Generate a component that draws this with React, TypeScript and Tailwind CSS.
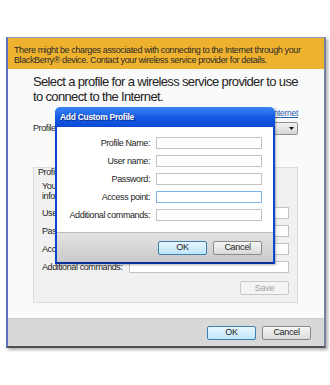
import React from 'react';

const Field = ({ focused }: { focused?: boolean }) => (
  <div
    className={
      'h-[12px] bg-white border ' +
      (focused ? 'border-[#7eb4ea]' : 'border-[#c3c3c3]')
    }
  />
);

const Btn = ({ label, primary, disabled }: { label: string; primary?: boolean; disabled?: boolean }) => (
  <div
    className={
      'w-[49px] h-[14px] rounded-[2px] border flex items-center justify-center text-[9px] leading-none tracking-[-0.3px] ' +
      (primary
        ? 'border-[#3c7fb1] bg-gradient-to-b from-[#eaf6fd] to-[#bee6fd] text-[#1e1e1e]'
        : disabled
        ? 'border-[#c9c9c9] bg-[#f4f4f4] text-[#a0a0a0]'
        : 'border-[#8a8a8a] bg-gradient-to-b from-[#f6f6f6] to-[#dadada] text-[#1e1e1e]')
    }
  >
    {label}
  </div>
);

export default function App() {
  return (
    <div className="relative w-[330px] h-[385px] bg-white pt-[37px] pl-[6px] font-['Liberation_Sans',Arial,sans-serif] text-[#1e1e1e]">
      {/* main window */}
      <div className="w-[320px] h-[311px] flex flex-col border-t border-t-[#8c97c4] border-l-2 border-l-[#5f71c0] border-r-2 border-r-[#75809f] border-b-2 border-b-[#505050] shadow-[2px_2px_3px_rgba(0,0,0,0.3)]">
        <div className="h-[31px] shrink-0 bg-[#efb22f] pl-[6px] pt-[7px] text-[9px] leading-[10px] tracking-[-0.38px] text-[#2a2a2a] whitespace-nowrap">
          <p>There might be charges associated with connecting to the Internet through your</p>
          <p>BlackBerry® device. Contact your wireless service provider for details.</p>
        </div>

        <div className="h-[249px] shrink-0 bg-[#fafafa] pl-[25px] pr-[26px] pt-[5px]">
          <h1 className="text-[13px] leading-[15px] tracking-[-0.65px] text-[#222] whitespace-nowrap">
            Select a profile for a wireless service provider to use
            <br />
            to connect to the Internet.
          </h1>
          <div className="mt-[4px] flex justify-end text-[8.5px] leading-[10px] tracking-[-0.3px]">
            <span className="text-[#2a5db0] underline">Set up Internet</span>
          </div>
          <div className="mt-[4px] h-[13px] flex items-center justify-between">
            <span className="text-[9px] tracking-[-0.4px]">Profile:</span>
            <div className="w-[150px] h-[13px] border border-[#8e8f8f] rounded-[2px] bg-gradient-to-b from-[#f2f2f2] to-[#d6d6d6] flex items-center justify-end pr-[3px]">
              <svg width="5" height="3" viewBox="0 0 5 3">
                <path d="M0 0h5L2.5 3z" fill="#111" />
              </svg>
            </div>
          </div>

          <div className="mt-[32px] h-[136px] border border-[#dcdcdc] bg-[#f1f1f1] pl-[8px] pr-[8px] text-[9px] tracking-[-0.4px]">
            <p className="-ml-[4px] -mt-[1px] leading-[10px]">Profile details</p>
            <div className="mt-[4px] leading-[10px]">
              <p>Your wireless service provider can give you</p>
              <p>information about these settings.</p>
            </div>
            <div className="mt-[6px] flex flex-col gap-[6px]">
              {['User name:', 'Password:', 'Access point:', 'Additional commands:'].map((l) => (
                <div key={l} className="h-[12px] flex items-center">
                  <span className="w-[87px] shrink-0 leading-none">{l}</span>
                  <div className="flex-1">
                    <Field />
                  </div>
                </div>
              ))}
            </div>
            <div className="mt-[8px] flex justify-end">
              <Btn label="Save" disabled />
            </div>
          </div>
        </div>

        <div className="flex-1 bg-[#d8d8d8] border-t border-t-[#cbcbcb] flex items-center justify-end gap-[6px] pr-[13px]">
          <Btn label="OK" primary />
          <Btn label="Cancel" />
        </div>
      </div>

      {/* Add Custom Profile dialog */}
      <div className="absolute left-[55px] top-[107px] w-[220px] h-[157px] flex flex-col shadow-[1px_1px_2px_rgba(0,0,0,0.3)]">
        <div className="h-[20px] shrink-0 rounded-t-[5px] bg-gradient-to-b from-[#3d86f5] via-[#155be3] to-[#0b4ad6] pl-[5px] flex items-center">
          <span className="text-white font-bold text-[8.5px] tracking-[-0.3px] [text-shadow:1px_1px_0_#0a2a8a]">Add Custom Profile</span>
        </div>
        <div className="flex-1 flex flex-col border-x-2 border-x-[#0b46d2] border-b-2 border-b-[#08309e]">
          <div className="h-[105px] shrink-0 bg-white pt-[10px] flex flex-col gap-[6px] text-[9px] tracking-[-0.4px]">
            {['Profile Name:', 'User name:', 'Password:', 'Access point:', 'Additional commands:'].map((l) => (
              <div key={l} className="h-[12px] flex items-center gap-[6px]">
                <span className="w-[93px] shrink-0 text-right leading-none">{l}</span>
                <div className="w-[106px]">
                  <Field focused={l === 'Access point:'} />
                </div>
              </div>
            ))}
          </div>
          <div className="flex-1 bg-gradient-to-b from-[#e4e4e4] to-[#c9c9c9] border-t border-t-[#bdbdbd] flex items-center justify-end gap-[6px] pr-[11px]">
            <Btn label="OK" primary />
            <Btn label="Cancel" />
          </div>
        </div>
      </div>
    </div>
  );
}
